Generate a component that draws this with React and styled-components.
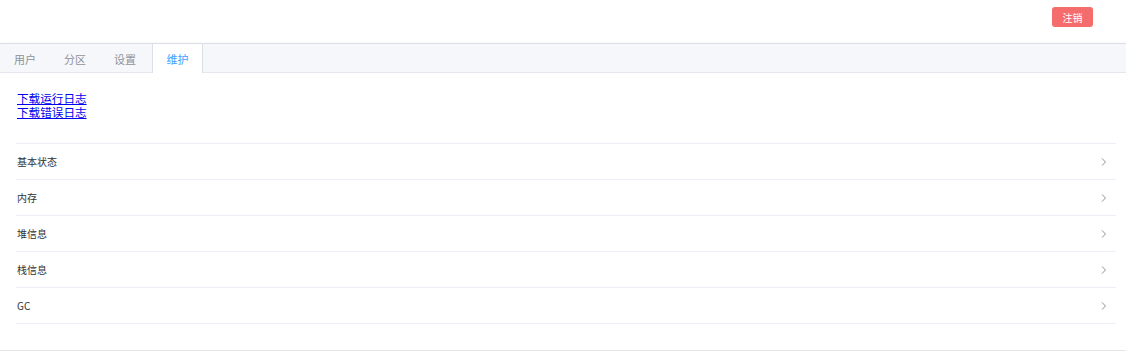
import React, { useState } from "react";
import styled, { createGlobalStyle } from "styled-components";

const Global = createGlobalStyle`
  body {
    margin: 0;
    background: #fff;
    font-family: "Noto Sans CJK SC", "Noto Sans", "Liberation Sans", sans-serif;
  }
`;

const Header = styled.div`
  height: 43px;
  display: flex;
  justify-content: flex-end;
  align-items: flex-start;
  padding-right: 33px;
`;

const LogoutButton = styled.button`
  margin-top: 7px;
  width: 41px;
  height: 20px;
  border: none;
  border-radius: 3px;
  background: #f56c6c;
  color: #fff;
  font-size: 10px;
  font-family: inherit;
  padding: 0;
  cursor: pointer;
`;

const Card = styled.div`
  border-top: 1px solid #dcdfe6;
  border-bottom: 1px solid #e6e6e6;
  box-shadow: 0 2px 4px rgba(0, 0, 0, 0.2);
  padding-bottom: 26px;
`;

const TabBar = styled.div`
  height: 28px;
  display: flex;
  background: #f5f7fa;
  border-bottom: 1px solid #e4e7ed;
`;

const Tab = styled.div`
  width: ${(p) => (p.$active ? "51px" : "50px")};
  margin-left: ${(p) => (p.$active ? "2px" : "0")};
  height: 29px;
  display: flex;
  align-items: center;
  justify-content: center;
  font-size: 11px;
  color: ${(p) => (p.$active ? "#409eff" : "#909399")};
  background: ${(p) => (p.$active ? "#fff" : "transparent")};
  border-left: ${(p) => (p.$active ? "1px solid #dcdfe6" : "none")};
  border-right: ${(p) => (p.$active ? "1px solid #dcdfe6" : "none")};
  box-sizing: border-box;
  cursor: pointer;
`;

const Content = styled.div`
  padding: 18px 10px 0 16px;
`;

const Links = styled.div`
  display: flex;
  flex-direction: column;
  align-items: flex-start;
  padding-left: 1px;
  margin-bottom: 24px;
`;

const Link = styled.a`
  display: block;
  height: 14px;
  font-size: 11.6px;
  line-height: 14px;
  color: #0000ee;
  text-decoration: underline;
`;

const Collapse = styled.div`
  border-top: 1px solid #ebeef5;
`;

const Item = styled.div`
  height: 35px;
  display: flex;
  align-items: center;
  justify-content: space-between;
  border-bottom: 1px solid #ebeef5;
  font-size: 10px;
  color: #303133;
  padding-left: 1px;
  cursor: pointer;
`;

const Arrow = () => (
  <svg width="12" height="12" viewBox="0 0 12 12" style={{ marginRight: 6 }}>
    <path d="M4 2.5 L7.5 6 L4 9.5" fill="none" stroke="#8a8f99" strokeWidth="1" />
  </svg>
);

const tabs = ["用户", "分区", "设置", "维护"];
const items = ["基本状态", "内存", "堆信息", "栈信息", "GC"];

export default function App() {
  const [active, setActive] = useState(3);
  return (
    <>
      <Global />
      <Header>
        <LogoutButton>注销</LogoutButton>
      </Header>
      <Card>
        <TabBar>
          {tabs.map((t, i) => (
            <Tab key={t} $active={i === active} onClick={() => setActive(i)}>
              {t}
            </Tab>
          ))}
        </TabBar>
        <Content>
          <Links>
            <Link href="#">下载运行日志</Link>
            <Link href="#">下载错误日志</Link>
          </Links>
          <Collapse>
            {items.map((it) => (
              <Item key={it}>
                <span>{it}</span>
                <Arrow />
              </Item>
            ))}
          </Collapse>
        </Content>
      </Card>
    </>
  );
}
